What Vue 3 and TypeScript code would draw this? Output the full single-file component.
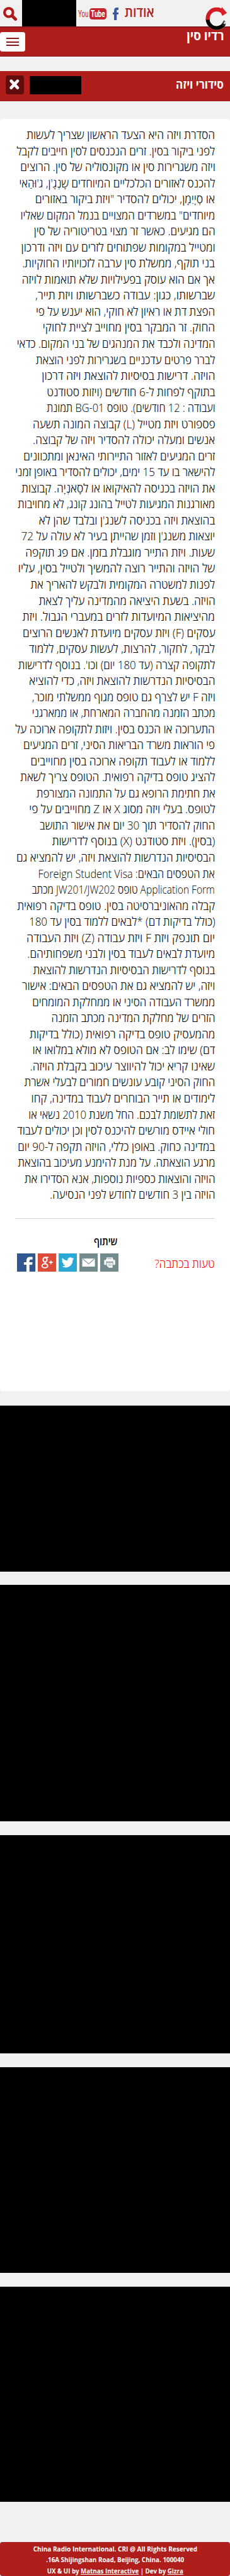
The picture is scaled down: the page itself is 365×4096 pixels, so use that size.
<script setup lang="ts">
import type { Directive } from 'vue'

interface Line { text: string; width: number }

const PAGE_WIDTH = 400.11

// Condenses or widens a text so that it takes the given width.
const vFit: Directive<HTMLElement, number> = {
  mounted(el, binding) {
    const page = el.closest('.page') as HTMLElement
    const unit = page.getBoundingClientRect().width / PAGE_WIDTH
    const natural = el.getBoundingClientRect().width / unit
    if (natural > 0) el.style.transform = `scaleX(${binding.value / natural})`
  },
}

// Each entry: text of the line and its left edge, in thirds of a pixel.
const source: [string, number][] = [
  ['הסדרת ויזה היא הצעד הראשון שצריך לעשות', 142],
  ['לפני ביקור בסין. זרים הנכנסים לסין חייבים לקבל', 90],
  ['ויזה משגרירות סין או מקונסוליה של סין. הרוצים', 107],
  ["להכנס לאזורים הכלכליים המיוחדים שָנְגָ'ן, ג'וּהַאי", 102],
  ['או סְיָיִמָן, יכולים להסדיר "ויזת ביקור באזורים', 187],
  ['מיוחדים" במשרדים המצויים בנמל המקום שאליו', 110],
  ['הם מגיעים. כאשר זר מצוי בטריטוריה של סין', 178],
  ['ומטייל במקומות שפתוחים לזרים עם ויזה ודרכון', 112],
  ['בני תוקף, ממשלת סין ערבה לזכויותיו החוקיות.', 120],
  ['אך אם הוא עוסק בפעילויות שלא תואמות לויזה', 118],
  ['שברשותו, כגון: עבודה כשברשותו ויזת תייר,', 187],
  ['הפצת דת או ראיון לא חוקי, הוא יענש על פי', 190],
  ['החוק. זר המבקר בסין מחוייב לציית לחוקי', 226],
  ['המדינה ולכבד את המנהגים של בני המקום. כדאי', 90],
  ['לברר פרטים עדכניים בשגרירות לפני הוצאת', 190],
  ['הויזה. דרישות בסיסיות להוצאת ויזה דרכון', 220],
  ['בתוקף לפחות ל-6 חודשים (ויזות סטודנט', 246],
  ['ועבודה : 12 חודשים). טופס BG-01 תמונת', 246],
  ['פספורט ויזת מטייל (L) קבוצה המונה תשעה', 172],
  ['אנשים ומעלה יכולה להסדיר ויזה של קבוצה.', 174],
  ['זרים המגיעים לאזור התיירותי האינאן ומתכוונים', 125],
  ['להישאר בו עד 15 ימים, יכולים להסדיר באופן זמני', 82],
  ['את הויזה בכניסה להאיקואו או לסָאנְיָה. קבוצות', 115],
  ['מאורגנות המגיעות לטייל בהונג קונג, לא מחויבות', 96],
  ["בהוצאת ויזה בכניסה לשנג'ן ובלבד שהן לא", 206],
  ["יוצאות משנג'ן וזמן שהייתן בעיר לא עולה על 72", 113],
  ['שעות. ויזת התייר מוגבלת בזמן. אם פג תוקפה', 136],
  ['של הויזה והתייר רוצה להמשיך ולטייל בסין, עליו', 98],
  ['לפנות למשטרה המקומית ולבקש להאריך את', 163],
  ['הויזה. בשעת היציאה מהמדינה עליך לצאת', 204],
  ['מהיציאות המיועדות לזרים במעברי הגבול. ויזת', 122],
  ['עסקים (F) ויזת עסקים מיועדת לאנשים הרוצים', 120],
  ['לבקר, לחקור, להרצות, לעשות עסקים, ללמוד', 155],
  ["לתקופה קצרה (עד 180 יום) וכו'. בנוסף לדרישות", 98],
  ['הבסיסיות הנדרשות להוצאת ויזה, כדי להוציא', 154],
  ['ויזה F יש לצרף גם טופס מגוף ממשלתי מוכר,', 168],
  ['מכתב הזמנה מהחברה המארחת, או ממארגני', 168],
  ['התערוכה או הכנס בסין. ויזות לתקופה ארוכה על', 84],
  ['פי הוראות משרד הבריאות הסיני, זרים המגיעים', 125],
  ['ללמוד או לעבוד תקופה ארוכה בסין מחוייבים', 162],
  ['להציג טופס בדיקה רפואית. הטופס צריך לשאת', 108],
  ['את חתימת הרופא גם על התמונה המצורפת', 192],
  ['לטופס. בעלי ויזה מסוג X או Z מחוייבים על פי', 154],
  ['החוק להסדיר תוך 30 יום את אישור התושב', 210],
  ['(בסין). ויזת סטודנט (X) בנוסף לדרישות', 274],
  ['הבסיסיות הנדרשות להוצאת ויזה, יש להמציא גם', 87],
  ['את הטפסים הבאים: Foreign Student Visa', 203],
  ['Application Form טופס JW201/JW202 מכתב', 171],
  ['קבלה מהאוניברסיטה בסין. טופס בדיקה רפואית', 93],
  ['(כולל בדיקות דם) *לבאים ללמוד בסין עד 180', 152],
  ['יום תונפק ויזת F ויזת עבודה (Z) ויזת העבודה', 142],
  ['מיועדת לבאים לעבוד בסין ולבני משפחותיהם.', 145],
  ['בנוסף לדרישות הבסיסיות הנדרשות להוצאת', 176],
  ['ויזה, יש להמציא גם את הטפסים הבאים: אישור', 118],
  ['ממשרד העבודה הסיני או ממחלקת המומחים', 172],
  ['הזרים של מחלקת המדינה מכתב הזמנה', 269],
  ['מהמעסיק טופס בדיקה רפואית (כולל בדיקות', 157],
  ['דם) שימו לב: אם הטופס לא מולא במלואו או', 172],
  ['שאינו קריא יכול להיווצר עיכוב בקבלת הויזה.', 160],
  ['החוק הסיני קובע עונשים חמורים לבעלי אשרת', 130],
  ['לימודים או תייר הבוחרים לעבוד במדינה, קחו', 166],
  ['זאת לתשומת לבכם. החל משנת 2010 נשאי או', 153],
  ['חולי איידס מורשים להיכנס לסין וכן יכולים לעבוד', 93],
  ['במדינה כחוק. באופן כללי, הויזה תקפה ל-90 יום', 96],
  ['מרגע הוצאתה. על מנת להימנע מעיכוב בהוצאת', 96],
  ['הויזה והוצאות כספיות נוספות, אנא הסדירו את', 130],
  ['הויזה בין 3 חודשים לחודש לפני הנסיעה.', 262],
]
const lines: Line[] = source.map(([text, left]) => ({ text, width: (1122 - left) / 3 + 1 }))
</script>

<template>
  <div class="page" dir="rtl">
    <header class="top">
      <svg class="logo" viewBox="0 0 40 44" aria-hidden="true">
        <path d="M5.5 23A15.3 15.3 0 0 0 34 29.5" fill="none" stroke="#fff" stroke-width="8.5" opacity=".55" />
        <path d="M4.9 22.5C5.4 31 12 37.8 20.5 37.8C26.500 37.800 31 35 33.600 30.500" fill="none" stroke="#050505" stroke-width="6.600" />
        <path d="M29.500 31L35.500 26M31 34L36.500 30M31 29L34 24.500" stroke="#444" stroke-width="1.300" />
        <path d="M5 23.500C4.500 12 12 5.600 20.500 5.500C26 5.500 29.500 7.600 32 10.500" fill="none" stroke="#d41d24" stroke-width="7" />
        <path d="M29.500 1.200L38.500 11.500L30.500 16.800L28 11Z" fill="#dc2028" />
        <path d="M3 17L8 22M4 13L10 18M7 9L12 13M13 5L17 8" stroke="#a3161c" stroke-width="1" stroke-dasharray="1 1" />
      </svg>
      <a class="about"><span v-fit="51.5" class="fit">אודות</span></a>
      <svg class="fb" viewBox="0 0 10 22" aria-hidden="true"><path d="M10 0v4H8.200Q6.800 4 6.800 5.400V8.500H10L9.700 12H6.800V22H2.300V12H0V8.500H2.300V5Q2.300 0 7.200 0Z" fill="#3a589b" /></svg>
      <div class="yt" dir="ltr">
        <span class="you"><span v-fit="18" class="fit ltr">You</span></span>
        <span class="tube"><span v-fit="25" class="fit ltr">Tube</span></span>
      </div>
      <div class="mask-top"></div>
      <svg class="search" viewBox="0 0 24 24" aria-hidden="true"><circle cx="9.700" cy="9.700" r="7.400" fill="none" stroke="#b2191b" stroke-width="4.600" /><path d="M15.500 15.500L21.500 21.300" stroke="#b2191b" stroke-width="5.400" stroke-linecap="round" /></svg>
    </header>

    <nav class="nav">
      <div class="brand"><span v-fit="65" class="fit">רדיו סין</span></div>
      <button class="menu" aria-label="תפריט"><i></i><i></i><i></i></button>
    </nav>

    <section class="titlebar">
      <h1><span v-fit="83" class="fit">סידורי ויזה</span></h1>
      <div class="mask-title"></div>
      <div class="close"><svg viewBox="0 0 32 32" aria-hidden="true"><path d="M9.500 9.500L20.800 21.500M20.800 9.500L9.500 21.500" stroke="#fff" stroke-width="5.200" stroke-linecap="round" /></svg></div>
    </section>

    <main class="card">
      <div class="article">
        <p v-for="(line, i) in lines" :key="i"><span v-fit="line.width" class="fit">{{ line.text }}</span></p>
      </div>
      <div class="actions">
        <a class="mistake"><span v-fit="105" class="fit">טעות בכתבה?</span></a>
        <div class="share">
          <div class="share-label"><span v-fit="41" class="fit">שיתוף</span></div>
          <div class="icons">
            <svg viewBox="0 0 32 32"><path fill="#738b8d" d="M0 0h32v32H0z" /><path fill="#fff" d="M11 7h11v3H11zM7 11.500h3V10h13v1.500h3V20h-3.500v-4.500h-12V20H7zM11.500 16.500h10V25h-6.500l-3.500-3.500z" /><path fill="#738b8d" d="M13 9h7v1h-7zM10 14h13v1H10zM13.500 18h6.500v1h-6.500zM13.500 20.500h6.500v1h-6.500z" /></svg>
            <svg viewBox="0 0 32 32"><path fill="#738b8d" d="M0 0h32v32H0z" /><path fill="#fff" d="M5 9h22v14H5z" /><path d="M6 9.500L16 18.500L26 9.500" fill="none" stroke="#738b8d" stroke-width="1.200" /></svg>
            <svg viewBox="0 0 32 32"><path fill="#2ba9d6" d="M0 0h32v32H0z" /><path transform="translate(5.200 5) scale(.9)" fill="#fff" d="M23.950 4.570a10 10 0 0 1-2.820.770 4.960 4.960 0 0 0 2.160-2.720 9.900 9.900 0 0 1-3.120 1.190 4.920 4.920 0 0 0-8.390 4.480A14 14 0 0 1 1.640 3.160a4.920 4.920 0 0 0 1.520 6.570 4.900 4.900 0 0 1-2.230-.610v.060a4.920 4.920 0 0 0 3.950 4.830 5 5 0 0 1-2.210.080 4.940 4.940 0 0 0 4.600 3.420A9.870 9.870 0 0 1 0 19.540a14 14 0 0 0 7.550 2.210c9.050 0 14-7.500 14-13.980 0-.210 0-.420-.020-.630a9.900 9.900 0 0 0 2.460-2.550z" /></svg>
            <svg viewBox="0 0 32 32"><path fill="#dd4c39" d="M0 0h32v32H0z" /><g fill="none" stroke="#fff"><ellipse cx="12.600" cy="11" rx="3.400" ry="4" stroke-width="2.200" /><ellipse cx="12.300" cy="21.600" rx="4.900" ry="3.500" stroke-width="2.100" /><path d="M12.500 7H18.500M14 14.500Q11 16 14.500 18.500" stroke-width="1.900" /><path d="M19.500 15.500H26M22.750 12.500V18.800" stroke-width="1.800" /></g></svg>
            <svg viewBox="0 0 32 32"><path fill="#30588f" d="M0 0h32v32H0z" /><path fill="#fff" d="M27 6v4.600h-3q-2.400 0-2.400 2.200v2.500H27l-.6 4.400h-4.800V32h-5.200V19.700H12v-4.400h4.400v-3Q16.400 6 22.800 6z" /></svg>
          </div>
        </div>
      </div>
    </main>

    <div class="panel p1"></div>
    <div class="panel p2"></div>
    <div class="panel p3"></div>
    <div class="panel p4"></div>
    <div class="panel p5"></div>

    <footer class="footer">
      <div><span v-fit="285.500" class="fit mid">China Radio International. CRI @ All Rights Reserved</span></div>
      <div><span v-fit="240" class="fit mid">16A Shijingshan Road, Beijing, China. 100040.</span></div>
      <div dir="ltr"><span v-fit="237" class="fit mid">UX &amp; UI by <u>Matnas Interactive</u> | Dev by <u>Gizra</u></span></div>
    </footer>
  </div>
</template>

<style>
html, body { margin: 0; background: #f1f1f1; overflow: hidden; }
</style>

<style scoped>
.page {
  zoom: 0.91225;
  width: 400.11px;
  height: 4490px;
  overflow: hidden;
  background: #f1f1f1;
  color: #000;
  font-family: "Open Sans", "Liberation Sans", "DejaVu Sans", sans-serif;
}
.fit { display: inline-block; white-space: nowrap; transform-origin: 100% 50%; }
.fit.ltr { transform-origin: 0 50%; }
.fit.mid { transform-origin: 50% 50%; }
.top { display: flex; height: 46px; position: relative; z-index: 2; }
.logo { width: 40px; height: 44px; margin: 11px 4px 0 0; flex: none; }
.about { width: 51px; margin: 0 88px 0 0; color: #b01e1e; font-size: 23.500px; font-weight: 600; line-height: 42.500px; flex: none; }
.fb { width: 10px; height: 22px; margin: 13px 11px 0 0; flex: none; }
.yt { display: flex; width: 49px; height: 20px; margin: 14px 11px 0 0; flex: none; font-family: Roboto, sans-serif; color: #c1272d; }
.you { width: 20px; font-size: 17px; line-height: 20px; }
.tube { width: 27px; padding-left: 2px; height: 20px; border-radius: 5px; background: #c1272d; color: #fff; font-size: 17px; font-weight: 700; line-height: 20px; }
.mask-top { width: 94px; height: 46px; margin-right: 4px; background: #000; flex: none; }
.search { width: 24px; height: 24px; margin: 12px 9px 0 0; flex: none; }
.nav { box-sizing: border-box; display: flex; justify-content: space-between; height: 53px; border-top: 3px solid #8b181b; border-bottom: 1px solid #8b181b; background: #af1e1b; }
.brand { margin: 0 11px; color: #fff; font-size: 21.500px; font-weight: 700; line-height: 29px; }
.menu { box-sizing: border-box; display: flex; flex-direction: column; gap: 4px; width: 44px; height: 34px; margin: 8px 0 0; padding: 10px 11px; border: 0; border-radius: 4px; background: #fff; }
.menu i { height: 2px; background: #8b181b; }
.titlebar { box-sizing: border-box; display: flex; height: 52px; margin-top: 25px; border-bottom: 1px solid #a31b19; background: #af1e1b; }
.titlebar h1 { margin: 0 11px 0 0; width: 83px; color: #fff; font-size: 20px; font-weight: 700; line-height: 48px; }
.mask-title { width: 90px; height: 32px; margin: 9px auto 0 9px; background: #000; }
.close { width: 32px; height: 32px; margin: 8px 0 0 10px; border-radius: 4px; background: #600d0e; }
.close svg { display: block; width: 32px; height: 32px; }
.card { box-sizing: border-box; height: 2218px; margin-top: 31px; padding: 13.500px 26px 0; border-radius: 5px; background: #fff; }
.article { box-sizing: border-box; height: 1904.500px; border-bottom: 2px solid #d3d3d3; font-size: 20.500px; font-weight: 300; }
.article p { margin: 0; height: 28px; line-height: 28px; white-space: nowrap; }
.actions { display: flex; justify-content: space-between; }
.mistake { margin-top: 63px; color: #f00; font-size: 20.500px; font-weight: 300; line-height: 28px; }
.share { width: 176px; margin: 27px 0 0 4px; }
.share-label { height: 33px; padding-right: 2px; font-size: 18px; font-weight: 600; line-height: 24px; }
.icons { display: flex; gap: 4px; }
.icons svg { display: block; width: 32px; height: 32px; }
.panel { background: #000; }
.p1 { height: 289px; margin-top: 25px; }
.p2 { height: 412px; margin-top: 24px; }
.p3 { height: 380px; margin-top: 24px; }
.p4 { height: 359px; margin-top: 24px; }
.p5 { height: 375px; margin-top: 24px; }
.footer { box-sizing: border-box; height: 59px; margin-top: 70px; padding-top: 2px; border-radius: 4px; background: #af1e1b; color: #fff; font-size: 12.500px; font-weight: 700; line-height: 19px; text-align: center; }
</style>
